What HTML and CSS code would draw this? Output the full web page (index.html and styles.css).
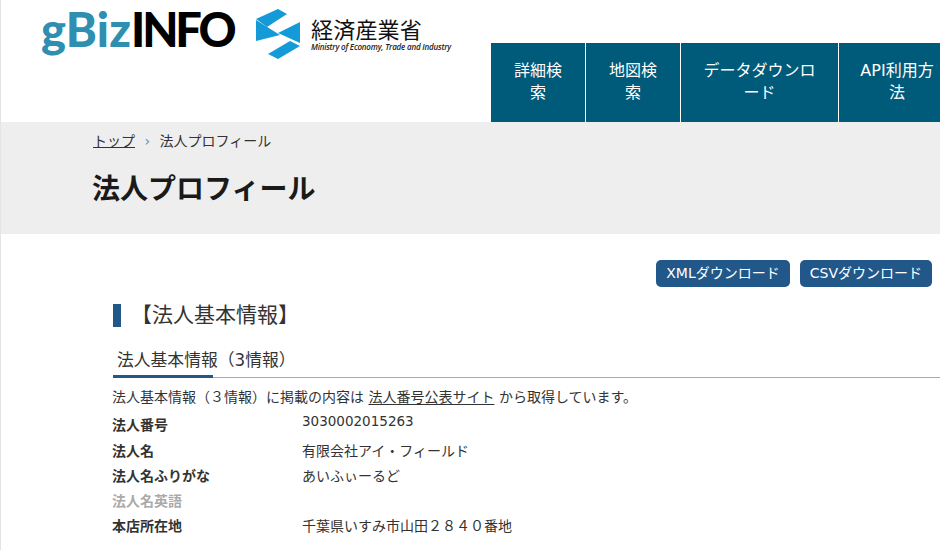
FILE: index.html
```html
<!doctype html>
<html lang="ja">

<head>
    <meta charset="UTF-8" />
    <meta name="viewport" content="width=device-width, initial-scale=1.0" />
    <title>法人プロフィール</title>
    <link rel="stylesheet" href="styles.css">
</head>

<body>
    <!-- Header -->
    <header class="site-header">
        <div class="logos">
            <div class="logo-gbiz"><span class="logo-gbiz-blue">gBiz</span><span class="logo-gbiz-black">INFO</span></div>
            <div class="logo-meti">
                <svg class="meti-mark" viewBox="0 0 44 50" width="44" height="50" aria-hidden="true">
                    <path fill="#149ad6" d="M0 10 22 0 31 5 11 18Z" />
                    <path fill="#149ad6" d="M0 11 24 26 0 32Z" />
                    <path fill="#149ad6" d="M44 13V34L22 24Z" />
                    <path fill="#149ad6" d="M12 45 34 32 44 37 22 50Z" />
                </svg>
                <div class="meti-text">
                    <div class="meti-ja">経済産業省</div>
                    <div class="meti-en">Ministry of Economy, Trade and Industry</div>
                </div>
            </div>
        </div>
        <nav class="main-nav">
            <a class="nav-item nav-search" href="#">詳細検索</a>
            <a class="nav-item nav-search" href="#">地図検索</a>
            <a class="nav-item nav-data" href="#">データダウンロード</a>
            <a class="nav-item nav-api" href="#">API利用方法</a>
        </nav>
    </header>

    <!-- Title band -->
    <div class="title-band">
        <div class="breadcrumb">
            <a href="#">トップ</a>
            <span class="breadcrumb-sep">›</span>
            <span>法人プロフィール</span>
        </div>
        <h1 class="page-title">法人プロフィール</h1>
    </div>

    <main class="content">
        <div class="download-buttons">
            <a class="download-button" href="#">XMLダウンロード</a>
            <a class="download-button" href="#">CSVダウンロード</a>
        </div>

        <h2 class="section-title">【法人基本情報】</h2>

        <div class="tabs">
            <div class="tab-active">法人基本情報（3情報）</div>
        </div>

        <p class="source-note">法人基本情報（３情報）に掲載の内容は <a href="#">法人番号公表サイト</a> から取得しています。</p>

        <dl class="profile">
            <dt class="first">法人番号</dt>
            <dd class="number">3030002015263</dd>
            <dt>法人名</dt>
            <dd>有限会社アイ・フィールド</dd>
            <dt>法人名ふりがな</dt>
            <dd>あいふぃーるど</dd>
            <dt class="empty">法人名英語</dt>
            <dd></dd>
            <dt>本店所在地</dt>
            <dd>千葉県いすみ市山田２８４０番地</dd>
        </dl>
    </main>
</body>

</html>
```

FILE: styles.css
```css
html,
body {
    height: 100%;
}

body {
    margin: 0;
    overflow: hidden;
    font-family: "DejaVu Sans", "Noto Sans CJK JP", sans-serif;
    font-size: 14px;
    color: #333;
    background: white;
    border-left: 1px solid #e4e4e4;
}

a {
    color: inherit;
}

/* Header */
.site-header {
    display: flex;
    height: 122px;
    width: 1000px;
}

.logos {
    box-sizing: border-box;
    display: flex;
    align-items: flex-start;
    width: 490px;
    padding: 1px 0 0 40px;
}

.logo-gbiz {
    width: 196px;
    font-family: Lato, sans-serif;
    font-weight: 900;
    font-size: 47px;
    line-height: 57px;
    white-space: nowrap;
    color: #000;
}

.logo-gbiz-blue {
    color: #2f8fb0;
    letter-spacing: 0.2px;
}

.logo-gbiz-black {
    letter-spacing: -3.2px;
}

.logo-meti {
    display: flex;
    margin: 8px 0 0 19px;
}

.meti-text {
    margin: 6px 0 0 11px;
}

.meti-ja {
    font-family: "Noto Sans CJK JP", sans-serif;
    font-size: 22px;
    line-height: 27px;
    letter-spacing: 0.2px;
    color: #111;
}

.meti-en {
    font-family: "Open Sans", sans-serif;
    font-size: 8px;
    line-height: 10px;
    font-style: italic;
    font-weight: 600;
    white-space: nowrap;
    letter-spacing: -0.2px;
    color: #222;
}

.main-nav {
    display: flex;
    align-self: flex-end;
    height: 79px;
    gap: 1px;
}

.nav-item {
    box-sizing: border-box;
    display: flex;
    align-items: center;
    justify-content: center;
    padding: 0 20px 2px;
    background: #005a7a;
    color: white;
    font-size: 16px;
    line-height: 22px;
    text-align: center;
    text-decoration: none;
}

.nav-search {
    width: 94px;
}

.nav-data {
    width: 157px;
}

.nav-api {
    width: 116px;
}

/* Title band */
.title-band {
    box-sizing: border-box;
    height: 112px;
    padding: 9px 0 0 92px;
    background: #eee;
}

.breadcrumb {
    font-size: 14px;
    line-height: 20px;
}

.breadcrumb-sep {
    margin: 0 5px;
    color: #5a8fb0;
}

.page-title {
    margin: 19px 0 0 -1px;
    font-size: 28px;
    line-height: 40px;
    font-weight: bold;
    color: #1a1a1a;
}

/* Content */
.content {
    padding: 26px 8px 0 112px;
}

.download-buttons {
    display: flex;
    justify-content: flex-end;
    gap: 10px;
}

.download-button {
    padding: 0 10px;
    height: 27px;
    line-height: 26px;
    border-radius: 5px;
    background: #22578a;
    color: white;
    font-size: 14px;
    text-decoration: none;
}

.section-title {
    margin: 17px 0 0;
    border-left: 8px solid #22578a;
    padding-left: 10px;
    font-size: 21px;
    line-height: 23px;
    font-weight: normal;
}

.tabs {
    margin: 19px -8px 0 0;
    border-bottom: 1px solid #aaa;
}

.tab-active {
    box-sizing: border-box;
    width: 100px;
    height: 32px;
    margin-bottom: -1px;
    padding-left: 4px;
    border-bottom: 3px solid #22578a;
    font-size: 16.8px;
    line-height: 28px;
    white-space: nowrap;
}

.source-note {
    margin: 9px 0 0 -1px;
    line-height: 20px;
}

.source-note a {
    text-underline-offset: 2px;
}

.profile {
    display: grid;
    grid-template-columns: 190px 1fr;
    grid-auto-rows: 25px;
    margin: 7px 0 0 -1px;
    line-height: 25px;
}

.profile dt {
    font-weight: bold;
}

.profile dt.first {
    margin-top: -1px;
}

.profile dt.empty {
    color: #aaa;
}

.profile dd {
    margin: 0;
}

.profile dd.number {
    margin-top: -5px;
    font-size: 13.5px;
}
```
